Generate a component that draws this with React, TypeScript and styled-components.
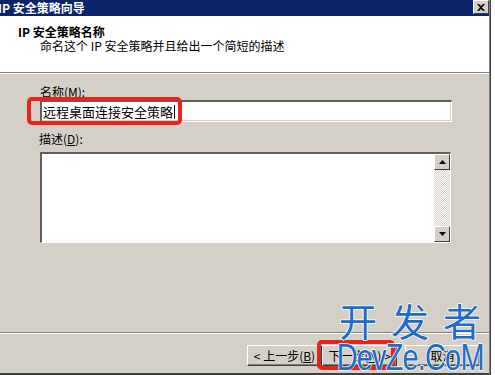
import React from "react";
import styled, { createGlobalStyle } from "styled-components";

const GlobalStyle = createGlobalStyle`
  html, body {
    margin: 0;
    padding: 0;
    background: #ffffff;
  }
  body {
    font-family: "Noto Sans CJK SC", "DejaVu Sans", sans-serif;
    font-size: 12px;
    color: #000;
  }
`;

const Window = styled.div`
  position: relative;
  width: 489px;
  height: 375px;
  display: flex;
  flex-direction: column;
  background: #d4d0c8;
  border-right: 1px solid #808080;
  box-shadow: 1px 0 0 #404040;
  overflow: hidden;
`;

const TitleBar = styled.div`
  height: 16px;
  flex: none;
  background: #0a246a;
  display: flex;
  align-items: center;
  justify-content: space-between;
  color: #fff;
  font-weight: bold;
  font-size: 12px;
  line-height: 16px;
  span {
    margin-left: -2px;
    white-space: pre;
  }
`;

const CloseButton = styled.div`
  width: 16px;
  height: 14px;
  margin-top: -2px;
  background: #d4d0c8;
  box-sizing: border-box;
  border-top: 1px solid #fff;
  border-left: 1px solid #fff;
  border-right: 1px solid #404040;
  border-bottom: 1px solid #404040;
  display: flex;
  align-items: center;
  justify-content: center;
`;

const Header = styled.div`
  height: 57px;
  flex: none;
  background: #fff;
  padding: 10px 0 0 18px;
  box-sizing: border-box;
  border-bottom: 1px solid #808080;
  box-shadow: 0 1px 0 #fff;
  line-height: 12px;
`;

const HeaderTitle = styled.div`
  font-weight: bold;
  font-size: 12px;
  white-space: pre;
`;

const HeaderSub = styled.div`
  margin: 2px 0 0 22px;
  font-size: 12px;
  white-space: pre;
`;

const Body = styled.div`
  flex: 1;
  padding: 13px 0 0 40px;
  display: flex;
  flex-direction: column;
`;

const Label = styled.div<{ $indent?: number; $top?: number }>`
  font-size: 12px;
  line-height: 12px;
  margin-left: ${(p) => p.$indent ?? 0}px;
  margin-top: ${(p) => p.$top ?? 0}px;
  u { text-decoration: underline; }
`;

const FieldWrap = styled.div`
  position: relative;
  width: 412px;
  margin-top: 2px;
`;

const TextInput = styled.div`
  height: 22px;
  box-sizing: border-box;
  background: #fff;
  border-top: 2px solid #606060;
  border-left: 2px solid #606060;
  border-bottom: 1px solid #fff;
  border-right: 1px solid #fff;
  box-shadow: inset -1px -1px 0 #d4d0c8;
  padding-left: 1px;
  font-size: 13px;
  line-height: 19px;
  display: flex;
  align-items: center;
`;

const Caret = styled.span`
  display: inline-block;
  width: 1px;
  height: 14px;
  background: #000;
  margin-left: 1px;
`;

const Highlight = styled.div<{ $w: number; $h: number; $x: number; $y: number }>`
  position: absolute;
  left: ${(p) => p.$x}px;
  top: ${(p) => p.$y}px;
  width: ${(p) => p.$w}px;
  height: ${(p) => p.$h}px;
  box-sizing: border-box;
  border: 4px solid #e8231a;
  border-radius: 5px;
  pointer-events: none;
`;

const TextArea = styled.div`
  width: 411px;
  height: 91px;
  margin-top: 7px;
  box-sizing: border-box;
  background: #fff;
  border-top: 2px solid #606060;
  border-left: 2px solid #606060;
  border-bottom: 1px solid #fff;
  border-right: 1px solid #fff;
  display: flex;
  justify-content: flex-end;
`;

const ScrollBar = styled.div`
  width: 16px;
  display: flex;
  flex-direction: column;
  background-color: #ece9e4;
  background-image: repeating-conic-gradient(#d4d0c8 0 25%, #fff 0 50%);
  background-size: 2px 2px;
`;

const ScrollBtn = styled.div`
  height: 16px;
  flex: none;
  box-sizing: border-box;
  background: #d4d0c8;
  border-top: 1px solid #fff;
  border-left: 1px solid #fff;
  border-right: 1px solid #404040;
  border-bottom: 1px solid #404040;
  display: flex;
  align-items: center;
  justify-content: center;
`;

const Track = styled.div`
  flex: 1;
`;

const Separator = styled.div`
  flex: none;
  height: 0;
  border-top: 1px solid #808080;
  border-bottom: 1px solid #fff;
`;

const Footer = styled.div`
  height: 41px;
  flex: none;
  box-sizing: border-box;
  padding: 11px 0 0 247px;
  display: flex;
  align-items: flex-start;
  border-bottom: 2px solid #404040;
`;

const Button = styled.div<{ $gap?: number }>`
  position: relative;
  width: 75px;
  height: 21px;
  margin-left: ${(p) => p.$gap ?? 0}px;
  box-sizing: border-box;
  background: #d4d0c8;
  border-top: 1px solid #fff;
  border-left: 1px solid #fff;
  border-right: 1px solid #404040;
  border-bottom: 1px solid #404040;
  box-shadow: inset -1px -1px 0 #808080;
  display: flex;
  align-items: center;
  justify-content: center;
  font-size: 12px;
  white-space: pre;
  u { text-decoration: underline; }
`;

const Watermark = styled.div`
  position: absolute;
  left: 330px;
  top: 299px;
  width: 160px;
  display: flex;
  flex-direction: column;
  align-items: center;
  color: #1c6cc8;
  -webkit-text-stroke: 1.5px #ffffff;
  paint-order: stroke fill;
  pointer-events: none;
`;

const WmTop = styled.div`
  font-family: "Noto Sans CJK SC", "DejaVu Sans", sans-serif;
  font-size: 38px;
  line-height: 42px;
  letter-spacing: 14px;
  margin-right: -14px;
`;

const WmBottom = styled.div`
  font-family: "Liberation Sans", sans-serif;
  font-size: 37px;
  line-height: 33px;
  letter-spacing: -1px;
  transform: scaleX(0.78);
  white-space: pre;
`;

export default function App(): React.ReactElement {
  return (
    <>
      <GlobalStyle />
      <Window>
        <TitleBar>
          <span>IP 安全策略向导</span>
          <CloseButton>
            <svg width="8" height="7" viewBox="0 0 8 7">
              <path d="M0 0 L2 0 L4 2 L6 0 L8 0 L5 3.5 L8 7 L6 7 L4 5 L2 7 L0 7 L3 3.5 Z" fill="#000" />
            </svg>
          </CloseButton>
        </TitleBar>
        <Header>
          <HeaderTitle>IP 安全策略名称</HeaderTitle>
          <HeaderSub>命名这个 IP 安全策略并且给出一个简短的描述</HeaderSub>
        </Header>
        <Body>
          <Label>名称(<u>M</u>):</Label>
          <FieldWrap>
            <TextInput>
              远程桌面连接安全策略<Caret />
            </TextInput>
            <Highlight $x={-13} $y={-3} $w={155} $h={28} />
          </FieldWrap>
          <Label $indent={-1} $top={11}>描述(<u>D</u>):</Label>
          <TextArea>
            <ScrollBar>
              <ScrollBtn>
                <svg width="7" height="4" viewBox="0 0 7 4">
                  <path d="M3.5 0 L7 4 L0 4 Z" fill="#000" />
                </svg>
              </ScrollBtn>
              <Track />
              <ScrollBtn>
                <svg width="7" height="4" viewBox="0 0 7 4">
                  <path d="M0 0 L7 0 L3.5 4 Z" fill="#000" />
                </svg>
              </ScrollBtn>
            </ScrollBar>
          </TextArea>
        </Body>
        <Separator />
        <Footer>
          <Button>&lt; 上一步(<u>B</u>)</Button>
          <Button>
            下一步(<u>N</u>) &gt;
            <Highlight $x={-6} $y={-6} $w={78} $h={30} />
          </Button>
          <Button $gap={8}>取消</Button>
        </Footer>
        <Watermark>
          <WmTop>开发者</WmTop>
          <WmBottom>DevZe.CoM</WmBottom>
        </Watermark>
      </Window>
    </>
  );
}
